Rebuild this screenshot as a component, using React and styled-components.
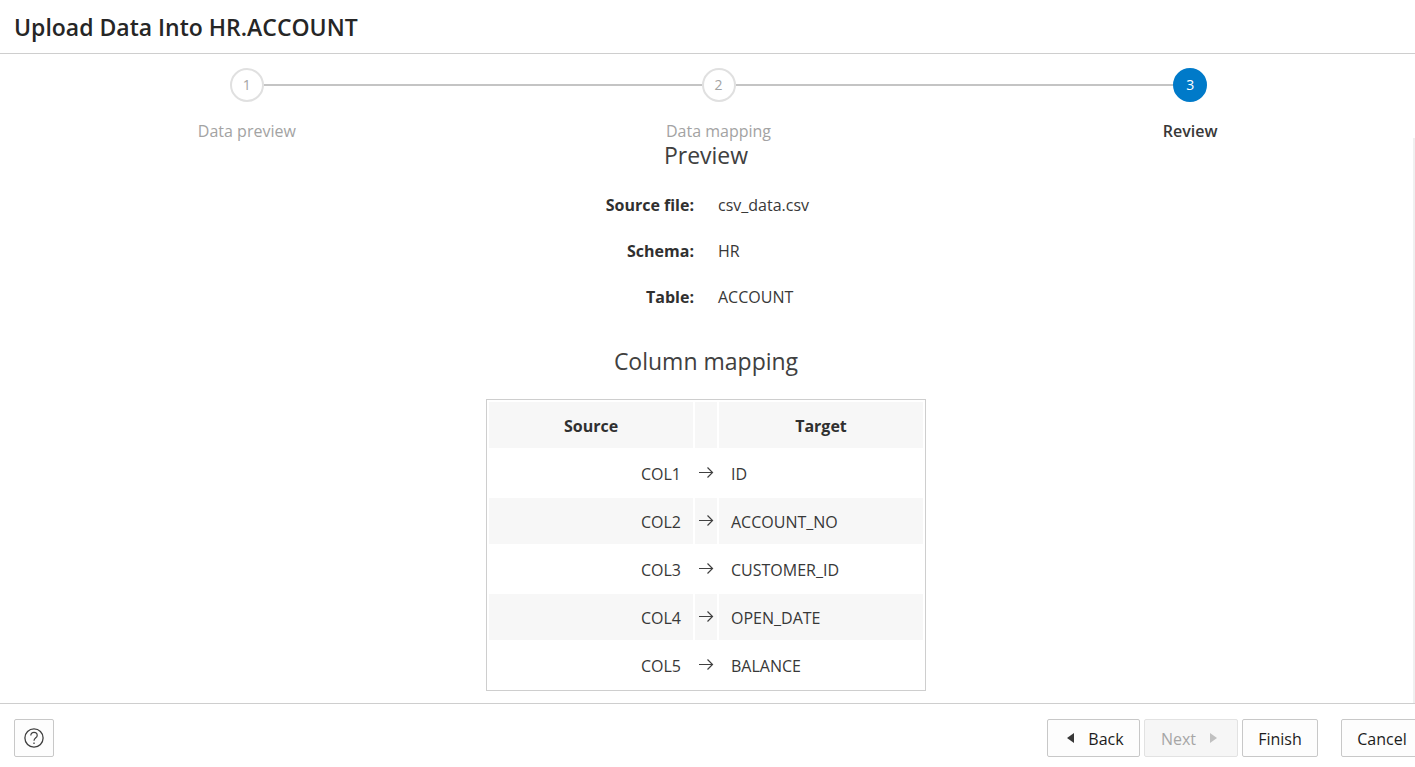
import React from 'react';
import styled, { createGlobalStyle, css } from 'styled-components';

const GlobalStyle = createGlobalStyle`
  *, *::before, *::after { box-sizing: border-box; }
  body {
    margin: 0;
    background: #fff;
    color: #383838;
    font-family: 'Segoe UI', 'Open Sans', 'Noto Sans', sans-serif;
    font-size: 16px;
    line-height: 22px;
  }
`;

const Dialog = styled.div`
  display: flex;
  flex-direction: column;
  min-height: 100vh;
  overflow: hidden;
`;

const Header = styled.header`
  padding: 11px 14px 10px;
  border-bottom: 1px solid #cecece;
`;

const Title = styled.h1`
  margin: 0;
  font-size: 23px;
  line-height: 32px;
  font-weight: 600;
  color: #262626;
`;

const Steps = styled.ol`
  display: flex;
  list-style: none;
  margin: 0 -11px 0 11px;
  padding: 14px 0 0;
  height: 84px;
`;

const Step = styled.li`
  flex: 1 1 0;
  text-align: center;
  color: ${({ $active }) => ($active ? '#383838' : '#a3a3a3')};
  font-weight: ${({ $active }) => ($active ? 600 : 400)};
`;

const StepTrack = styled.div`
  display: flex;
  align-items: center;
  margin-bottom: 18px;
`;

const Line = styled.span`
  flex: 1;
  height: 2px;
  background: ${({ $hidden }) => ($hidden ? 'transparent' : '#c4c4c4')};
`;

const Circle = styled.span`
  display: flex;
  align-items: center;
  justify-content: center;
  width: 34px;
  height: 34px;
  border: 2px solid #e0e0e0;
  border-radius: 50%;
  font-size: 14px;
  font-weight: 400;
  ${({ $active }) => $active && css`
    border-color: #007ac9;
    background: #007ac9;
    color: #fff;
  `}
`;

const Content = styled.main`
  flex: 1;
  display: flex;
  flex-direction: column;
  align-items: center;
  padding: 0 1px 12px 0;
  border-right: 2px solid #f0f0f0;
`;

const SectionTitle = styled.h2`
  margin: 0;
  padding-top: 2px;
  font-size: 23px;
  line-height: 30px;
  font-weight: 400;
  color: #404040;
`;

const Details = styled.dl`
  display: grid;
  grid-template-columns: 1fr 1fr;
  column-gap: 24px;
  align-self: stretch;
  margin: 12px 0 24px;
  line-height: 46px;
`;

const Term = styled.dt`
  text-align: right;
  font-weight: 700;
  color: #303030;
`;

const Value = styled.dd`
  margin: 0;
`;

const MappingTable = styled.table`
  margin-top: 23px;
  border: 1px solid #cecece;
  border-collapse: separate;
  border-spacing: 2px;
`;

const Row = styled.tr`
  height: 46px;

  th, td {
    background: ${({ $shaded }) => ($shaded ? '#f7f7f7' : 'transparent')};
  }
`;

const HeadCell = styled.th`
  width: ${({ $narrow }) => ($narrow ? '22px' : '204px')};
  padding: 2px 0 0;
  font-weight: 700;
  color: #303030;
`;

const Cell = styled.td`
  padding: 2px 12px 0;
  text-align: ${({ $align }) => $align || 'left'};
`;

const ArrowCell = styled.td`
  padding: 0 3px;

  svg { display: block; }
`;

const Footer = styled.footer`
  display: flex;
  align-items: center;
  gap: 4px;
  padding: 15px 0 10px 14px;
  margin-right: -8px;
  border-top: 1px solid #cecece;
`;

const Button = styled.button`
  display: flex;
  align-items: center;
  justify-content: center;
  gap: 14px;
  height: 38px;
  min-width: ${({ $width }) => $width}px;
  padding: 2px 0 0;
  border: 1px solid #c8c8c8;
  border-radius: 2px;
  background: #fdfdfd;
  color: #1c1c1c;
  font: inherit;

  &:disabled {
    border-color: #e2e2e2;
    background: #f6f6f6;
    color: #a6a6a6;
  }
`;

const IconButton = styled(Button)`
  width: 40px;
  padding: 0;
`;

const Spacer = styled.span`
  flex: ${({ $width }) => ($width ? `0 0 ${$width}px` : '1')};
`;

const steps = ['Data preview', 'Data mapping', 'Review'];
const activeStep = 2;

const details = [
  ['Source file:', 'csv_data.csv'],
  ['Schema:', 'HR'],
  ['Table:', 'ACCOUNT'],
];

const mapping = [
  ['COL1', 'ID'],
  ['COL2', 'ACCOUNT_NO'],
  ['COL3', 'CUSTOMER_ID'],
  ['COL4', 'OPEN_DATE'],
  ['COL5', 'BALANCE'],
];

const ArrowIcon = () => (
  <svg width="16" height="16" viewBox="0 0 16 16" fill="none" stroke="#404040" strokeWidth="1.2" aria-hidden="true">
    <path d="M1 7.5H14.5M9.5 2.5L14.5 7.5L9.5 12.5" />
  </svg>
);

const HelpIcon = () => (
  <svg width="20" height="20" viewBox="0 0 20 20" fill="none" stroke="#404040" aria-hidden="true">
    <circle cx="10" cy="10" r="9.1" strokeWidth="1.3" />
    <path d="M6.8 7.6C6.8 5.4 8.1 4.4 10 4.4S13.2 5.5 13.2 7.4C13.2 9.7 10 9.9 10 12.8" strokeWidth="1.2" />
    <path d="M10 14.6V16" strokeWidth="1.3" />
  </svg>
);

const Triangle = ({ right }) => (
  <svg width="11" height="14" viewBox="0 0 11 14" aria-hidden="true">
    <path d={right ? 'M0 1L7 6L0 11Z' : 'M11 1L4 6L11 11Z'} fill={right ? '#c0c0c0' : '#383838'} />
  </svg>
);

export default function App() {
  return (
    <>
      <GlobalStyle />
      <Dialog>
        <Header>
          <Title>Upload Data Into HR.ACCOUNT</Title>
        </Header>
        <Steps>
          {steps.map((label, i) => (
            <Step key={label} $active={i === activeStep} aria-current={i === activeStep ? 'step' : undefined}>
              <StepTrack>
                <Line $hidden={i === 0} />
                <Circle $active={i === activeStep}>{i + 1}</Circle>
                <Line $hidden={i === steps.length - 1} />
              </StepTrack>
              {label}
            </Step>
          ))}
        </Steps>
        <Content>
          <SectionTitle>Preview</SectionTitle>
          <Details>
            {details.map(([term, value]) => (
              <React.Fragment key={term}>
                <Term>{term}</Term>
                <Value>{value}</Value>
              </React.Fragment>
            ))}
          </Details>
          <SectionTitle>Column mapping</SectionTitle>
          <MappingTable>
            <thead>
              <Row $shaded>
                <HeadCell scope="col">Source</HeadCell>
                <HeadCell $narrow />
                <HeadCell scope="col">Target</HeadCell>
              </Row>
            </thead>
            <tbody>
              {mapping.map(([source, target], i) => (
                <Row key={source} $shaded={i % 2 === 1}>
                  <Cell $align="right">{source}</Cell>
                  <ArrowCell><ArrowIcon /></ArrowCell>
                  <Cell>{target}</Cell>
                </Row>
              ))}
            </tbody>
          </MappingTable>
        </Content>
        <Footer>
          <IconButton type="button" aria-label="Help"><HelpIcon /></IconButton>
          <Spacer />
          <Button type="button" $width={93}><Triangle />Back</Button>
          <Button type="button" $width={94} disabled>Next<Triangle right /></Button>
          <Button type="button" $width={76}>Finish</Button>
          <Spacer $width={15} />
          <Button type="button" $width={82}>Cancel</Button>
        </Footer>
      </Dialog>
    </>
  );
}
